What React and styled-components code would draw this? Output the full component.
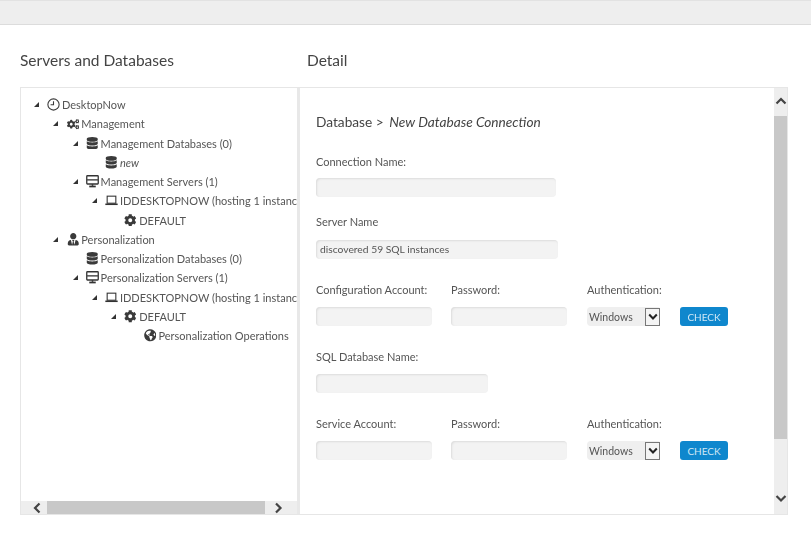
import React from "react";
import styled, { createGlobalStyle } from "styled-components";
import { FaCogs, FaDatabase, FaCog, FaUserTie, FaGlobeAmericas } from "react-icons/fa";

const Global = createGlobalStyle`
  html, body { margin: 0; padding: 0; background: #fff; }
  body { font-family: Lato, "Open Sans", "Liberation Sans", sans-serif; color: #555; }
`;

const Page = styled.div`
  width: 811px;
  height: 535px;
  overflow: hidden;
  display: flex;
  flex-direction: column;
  filter: blur(0.35px);
`;
const TopBar = styled.div`
  height: 23px;
  flex: none;
  background: #eeeeee;
  border-top: 1px solid #e2e2e2;
  border-bottom: 1px solid #dcdcdc;
`;
const Headings = styled.div`
  display: flex;
  padding: 25px 0 0 20px;
  height: 37px;
  flex: none;
`;
const Heading = styled.h2`
  margin: 0;
  font-size: 15.5px;
  line-height: 21px;
  font-weight: 400;
  color: #444;
  width: ${(p) => p.$w}px;
`;
const Panels = styled.div`
  display: flex;
  margin-left: 20px;
  width: 768px;
  height: 428px;
  flex: none;
  border: 1px solid #e6e6e6;
  box-sizing: border-box;
`;
const TreePane = styled.div`
  width: 276px;
  flex: none;
  display: flex;
  flex-direction: column;
`;
const TreeBody = styled.div`
  flex: 1;
  overflow: hidden;
  padding-top: 7px;
`;
const Row = styled.div`
  height: 19.25px;
  display: flex;
  align-items: center;
  white-space: nowrap;
  padding-left: ${(p) => 13 + p.$level * 19.3}px;
  font-size: 11px;
  color: #555;
  font-style: ${(p) => (p.$italic ? "italic" : "normal")};
`;
const Arrow = styled.span`
  width: 0;
  height: 0;
  flex: none;
  margin-right: 8px;
  border-style: solid;
  border-width: 0 0 5px 5px;
  border-color: transparent transparent ${(p) => (p.$hidden ? "transparent" : "#333")} transparent;
`;
const IconWrap = styled.span`
  width: 13px;
  height: 13px;
  flex: none;
  margin-right: 2px;
  display: inline-flex;
  align-items: center;
  justify-content: center;
  color: #3a3a3a;
  font-size: 12.5px;
`;
const HScroll = styled.div`
  height: 13px;
  flex: none;
  background: #eeeeee;
  display: flex;
  align-items: center;
`;
const ScrollButton = styled.div`
  flex: none;
  box-sizing: border-box;
  width: ${(p) => p.$w || 13}px;
  height: ${(p) => p.$h || 13}px;
  padding-left: ${(p) => p.$pl || 0}px;
  padding-right: ${(p) => p.$pr || 0}px;
  display: flex;
  align-items: center;
  justify-content: center;
`;
const HThumb = styled.div`
  flex: 1;
  height: 13px;
  background: #c8c8c8;
`;
const Splitter = styled.div`
  width: 3px;
  flex: none;
  background: #e8e8e8;
`;
const DetailPane = styled.div`
  flex: 1;
  display: flex;
  min-width: 0;
`;
const Form = styled.div`
  flex: 1;
  padding: 25px 0 0 16px;
  display: flex;
  flex-direction: column;
`;
const Title = styled.div`
  font-size: 13.7px;
  line-height: 18px;
  color: #444;
  margin-bottom: 23px;
  em { font-style: italic; margin-left: 2px; }
`;
const Label = styled.div`
  font-size: 11px;
  line-height: 15px;
  height: 15px;
  color: #555;
  white-space: nowrap;
`;
const Section = styled.div`
  display: flex;
  align-items: flex-end;
  margin-bottom: ${(p) => p.$mb}px;
`;
const Field = styled.div`
  display: flex;
  flex-direction: column;
  gap: ${(p) => p.$gap || 10}px;
  width: ${(p) => (p.$w ? `${p.$w}px` : "auto")};
  flex: none;
`;
const Input = styled.div`
  width: ${(p) => p.$w}px;
  height: 19px;
  box-sizing: border-box;
  background: #f3f3f3;
  border-radius: 4px;
  box-shadow: inset 1px 1px 2px #dcdcdc;
  font-size: 10.3px;
  line-height: 19px;
  padding-left: 4px;
  color: #555;
`;
const Select = styled.div`
  width: 73px;
  height: 19px;
  display: flex;
  align-items: center;
  justify-content: space-between;
  background: #efefef;
  border-radius: 4px 2px 2px 4px;
  font-size: 10.5px;
  color: #555;
  padding-left: 2px;
  box-sizing: border-box;
`;
const SelectBtn = styled.span`
  width: 15px;
  height: 18px;
  box-sizing: border-box;
  border: 1px solid #777;
  background: #f4f4f4;
  display: flex;
  align-items: center;
  justify-content: center;
`;
const CheckButton = styled.button`
  width: 48px;
  height: 19px;
  border: 0;
  padding: 0;
  border-radius: 3px;
  background: #0f87cd;
  color: #cfe7f6;
  font: 400 10px Lato, sans-serif;
`;
const VScroll = styled.div`
  width: 13px;
  flex: none;
  background: #eeeeee;
  display: flex;
  flex-direction: column;
`;
const VThumb = styled.div`
  height: 323px;
  flex: none;
  background: #c8c8c8;
`;
const VSpacer = styled.div`
  flex: 1;
`;

const Chevron = ({ d }) => {
  const paths = {
    up: "M1.5 7.5 L6 3 L10.5 7.5",
    down: "M1.5 4 L6 8.5 L10.5 4",
    left: "M7.5 1.5 L3 6 L7.5 10.5",
    right: "M4 1.5 L8.5 6 L4 10.5",
  };
  return (
    <svg width="12" height="12" viewBox="0 0 12 12">
      <path d={paths[d]} fill="none" stroke="#444" strokeWidth="2.2" />
    </svg>
  );
};

const ClockIcon = () => (
  <svg width="13" height="13" viewBox="0 0 12 12" fill="none" stroke="#3a3a3a" strokeWidth="1">
    <circle cx="6" cy="6" r="5.2" />
    <path d="M6 3 V6.2 H3.3" />
  </svg>
);
const ServerIcon = () => (
  <svg width="13" height="13" viewBox="0 0 12 12" fill="none" stroke="#333">
    <rect x="0.7" y="0.7" width="10.6" height="7.6" rx="0.6" strokeWidth="1.2" />
    <path d="M1 4.5 H11" strokeWidth="1.2" />
    <path d="M3 10.6 H9" strokeWidth="1.6" />
    <path d="M6 8.5 V10" strokeWidth="1.4" />
  </svg>
);
const LaptopIcon = () => (
  <svg width="13" height="13" viewBox="0 0 12 12" fill="none" stroke="#333">
    <rect x="2" y="2" width="8" height="6.5" strokeWidth="1" />
    <path d="M0.3 9.5 H11.7" strokeWidth="1.4" />
  </svg>
);
const SelectChevron = () => (
  <svg width="10" height="8" viewBox="0 0 10 8">
    <path d="M1.2 1.5 L5 5.5 L8.8 1.5" fill="none" stroke="#222" strokeWidth="2" />
  </svg>
);

const tree = [
  { level: 0, arrow: true, icon: <ClockIcon />, text: "DesktopNow" },
  { level: 1, arrow: true, icon: <FaCogs />, text: "Management" },
  { level: 2, arrow: true, icon: <FaDatabase />, text: "Management Databases (0)" },
  { level: 3, icon: <FaDatabase />, text: "new", italic: true },
  { level: 2, arrow: true, icon: <ServerIcon />, text: "Management Servers (1)" },
  { level: 3, arrow: true, icon: <LaptopIcon />, text: "IDDESKTOPNOW (hosting 1 instance)" },
  { level: 4, icon: <FaCog />, text: "DEFAULT" },
  { level: 1, arrow: true, icon: <FaUserTie />, text: "Personalization" },
  { level: 2, icon: <FaDatabase />, text: "Personalization Databases (0)" },
  { level: 2, arrow: true, icon: <ServerIcon />, text: "Personalization Servers (1)" },
  { level: 3, arrow: true, icon: <LaptopIcon />, text: "IDDESKTOPNOW (hosting 1 instance)" },
  { level: 4, arrow: true, icon: <FaCog />, text: "DEFAULT" },
  { level: 5, icon: <FaGlobeAmericas />, text: "Personalization Operations" },
];

const CredentialRow = ({ label, mb }) => (
  <Section $mb={mb}>
    <Field $w={135}>
      <Label>{label}</Label>
      <Input $w={116} />
    </Field>
    <Field $w={136}>
      <Label>Password:</Label>
      <Input $w={116} />
    </Field>
    <Field $w={93}>
      <Label>Authentication:</Label>
      <Select>
        Windows
        <SelectBtn>
          <SelectChevron />
        </SelectBtn>
      </Select>
    </Field>
    <CheckButton>CHECK</CheckButton>
  </Section>
);

export default function App() {
  return (
    <Page>
      <Global />
      <TopBar />
      <Headings>
        <Heading $w={287}>Servers and Databases</Heading>
        <Heading>Detail</Heading>
      </Headings>
      <Panels>
        <TreePane>
          <TreeBody>
            {tree.map((n, i) => (
              <Row key={i} $level={n.level} $italic={n.italic}>
                <Arrow $hidden={!n.arrow} />
                <IconWrap>{n.icon}</IconWrap>
                {n.text}
              </Row>
            ))}
          </TreeBody>
          <HScroll>
            <ScrollButton $w={26} $pl={8}>
              <Chevron d="left" />
            </ScrollButton>
            <HThumb />
            <ScrollButton $w={32} $pr={6}>
              <Chevron d="right" />
            </ScrollButton>
          </HScroll>
        </TreePane>
        <Splitter />
        <DetailPane>
          <Form>
            <Title>
              Database &gt; <em>New Database Connection</em>
            </Title>
            <Section $mb={17}>
              <Field $gap={9}>
                <Label>Connection Name:</Label>
                <Input $w={240} />
              </Field>
            </Section>
            <Section $mb={23}>
              <Field $gap={11}>
                <Label>Server Name</Label>
                <Input $w={242}>discovered 59 SQL instances</Input>
              </Field>
            </Section>
            <CredentialRow label="Configuration Account:" mb={23} />
            <Section $mb={23}>
              <Field>
                <Label>SQL Database Name:</Label>
                <Input $w={172} />
              </Field>
            </Section>
            <CredentialRow label="Service Account:" mb={0} />
          </Form>
          <VScroll>
            <ScrollButton $h={28}>
              <Chevron d="up" />
            </ScrollButton>
            <VThumb />
            <VSpacer />
            <ScrollButton $h={32}>
              <Chevron d="down" />
            </ScrollButton>
          </VScroll>
        </DetailPane>
      </Panels>
    </Page>
  );
}
